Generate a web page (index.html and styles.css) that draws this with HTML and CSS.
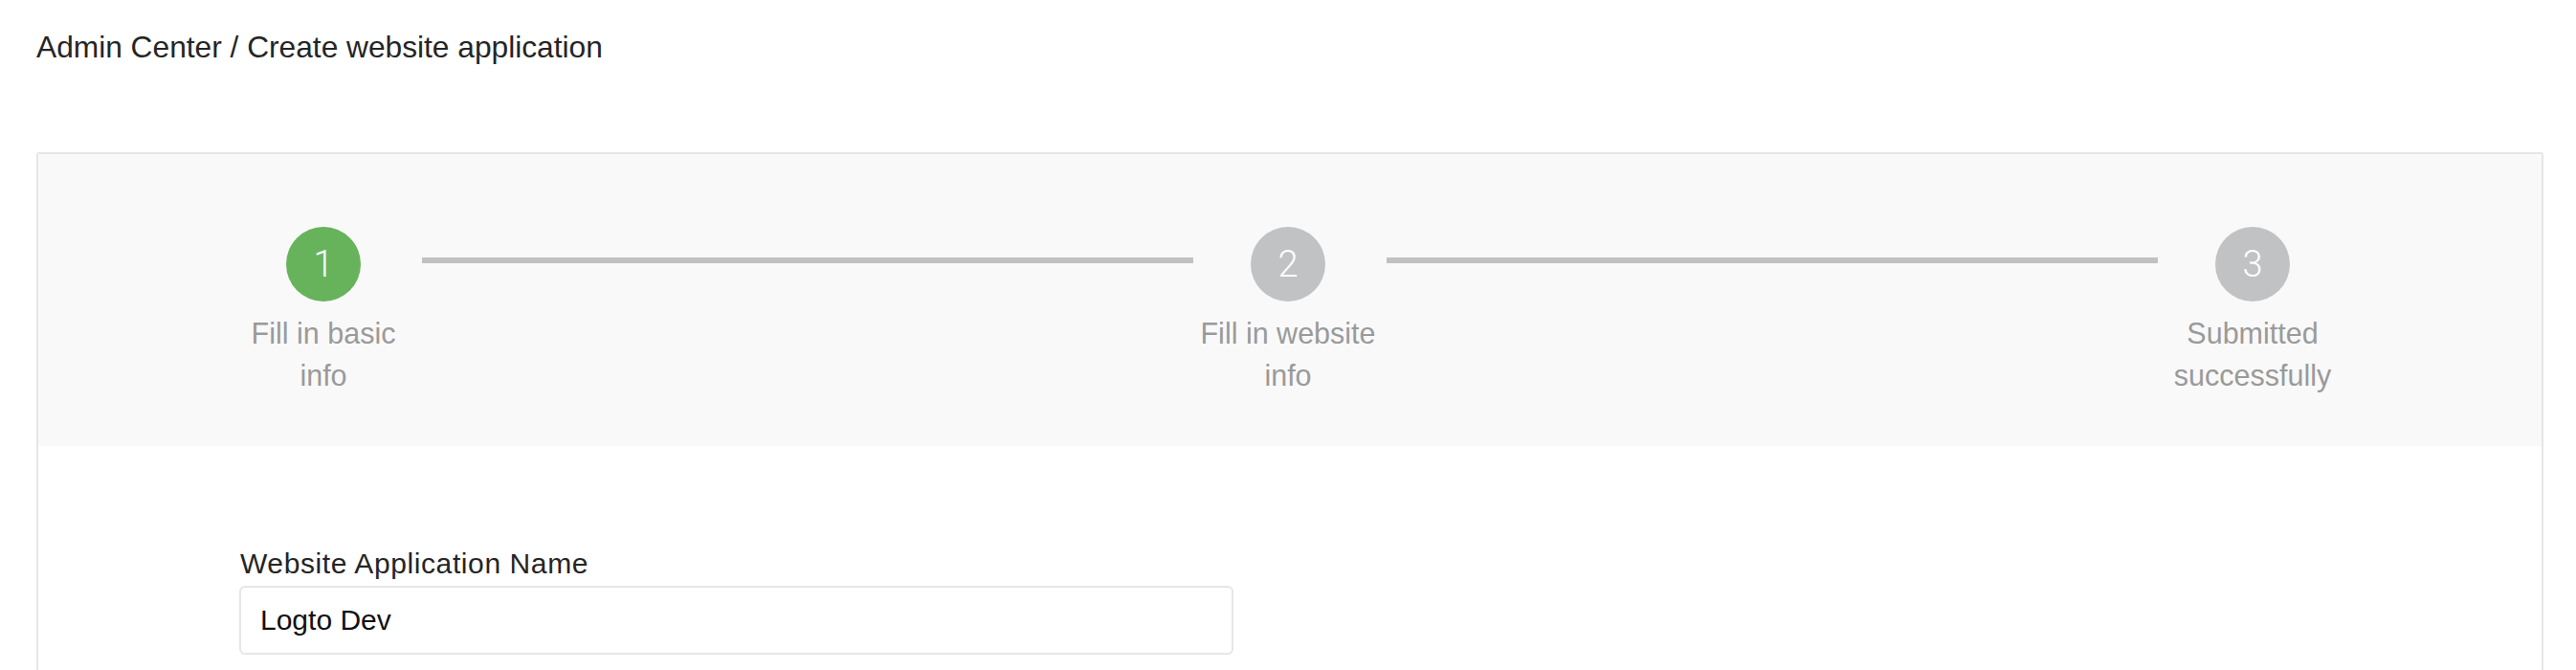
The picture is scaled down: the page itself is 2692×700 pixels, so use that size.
FILE: index.html
```html
<!DOCTYPE html>
<html lang="en">
<head>
<meta charset="utf-8">
<title>Create website application</title>
<link rel="stylesheet" href="styles.css">
</head>
<body>
<div class="page">
  <div class="breadcrumb">Admin Center / Create website application</div>
  <div class="card">
    <div class="steps-header">
      <div class="step">
        <div class="circle active">1</div>
        <div class="step-label">Fill in basic info</div>
      </div>
      <div class="connector"></div>
      <div class="step">
        <div class="circle">2</div>
        <div class="step-label">Fill in website info</div>
      </div>
      <div class="connector"></div>
      <div class="step">
        <div class="circle">3</div>
        <div class="step-label">Submitted successfully</div>
      </div>
    </div>
    <div class="form">
      <label class="field-label" for="appName">Website Application Name</label>
      <input class="text-input" id="appName" type="text" value="Logto Dev">
    </div>
  </div>
</div>
</body>
</html>
```
FILE: styles.css
```css
html, body {
  margin: 0;
  background: #ffffff;
  font-family: "Liberation Sans", Arial, sans-serif;
}

.page {
  padding: 31px 34px 0 38px;
}

.breadcrumb {
  font-size: 31.7px;
  line-height: 36px;
  color: #252525;
}

.card {
  margin-top: 92px;
  border: 2px solid #e6e6e6;
  border-radius: 3px;
  background: #ffffff;
}

.steps-header {
  background: #f9f9f9;
  padding: 76px 207px 52px 203px;
  display: flex;
  align-items: flex-start;
}

.step {
  width: 190px;
  flex-shrink: 0;
  display: flex;
  flex-direction: column;
  align-items: center;
}

.circle {
  width: 78px;
  height: 78px;
  border-radius: 50%;
  background: #c1c2c4;
  color: #ffffff;
  font-family: Roboto, "Liberation Sans", sans-serif;
  font-weight: 300;
  font-size: 38px;
  line-height: 78px;
  text-align: center;
}

.circle.active {
  background: #67b35b;
}

.step-label {
  margin-top: 11px;
  font-size: 30.5px;
  line-height: 44px;
  color: #9a9a9a;
  text-align: center;
}

.connector {
  flex: 1;
  height: 6px;
  background: #c0c1c3;
  margin: 32px 4px 0 8px;
}

.form {
  padding: 103px 0 120px 210px;
}

.field-label {
  display: block;
  padding-left: 1px;
  font-size: 30px;
  line-height: 40px;
  letter-spacing: 0.6px;
  color: #252525;
}

.text-input {
  display: block;
  margin-top: 3px;
  width: 1039px;
  height: 72px;
  box-sizing: border-box;
  border: 2px solid #e6e6e6;
  border-radius: 6px;
  padding: 0 20px;
  font-family: "Liberation Sans", Arial, sans-serif;
  font-size: 30px;
  color: #111111;
  background: #ffffff;
  outline: none;
}
```
